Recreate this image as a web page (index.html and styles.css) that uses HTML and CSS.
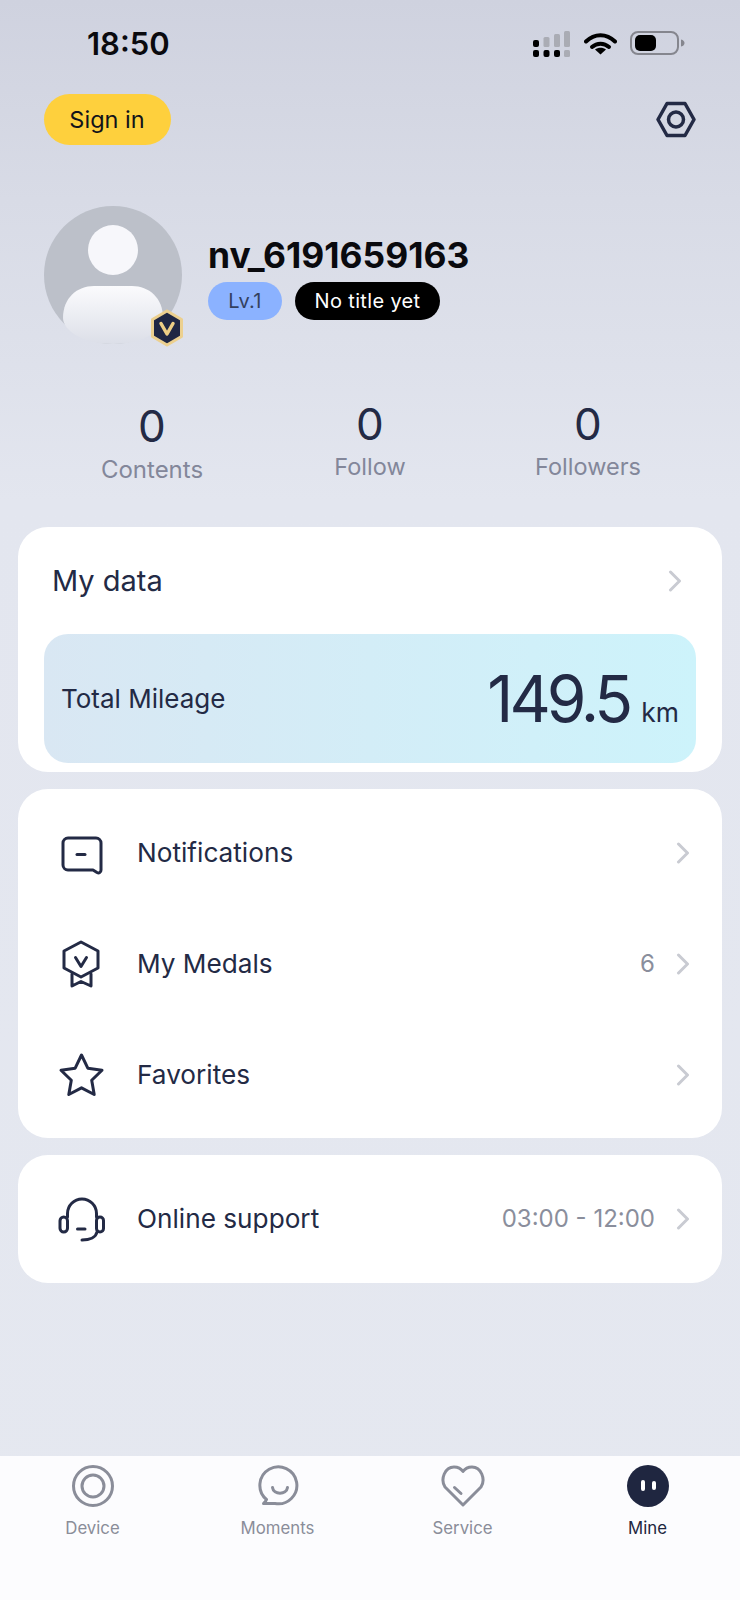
FILE: index.html
```html
<!DOCTYPE html>
<html lang="en">
<head>
<meta charset="utf-8">
<title>Mine</title>
<link rel="stylesheet" href="styles.css">
</head>
<body>
<div class="phone">
  <div class="status">
    <span class="time">18:50</span>
    <div class="status-icons">
      <svg class="signal" width="44" height="28" viewBox="0 0 44 28">
        <g fill="#000"><rect x="1" y="9" width="6" height="7" rx="2"/><rect x="1" y="19" width="6" height="7" rx="2"/><rect x="11.500" y="19" width="6" height="7" rx="2"/><rect x="22" y="19" width="6" height="7" rx="2"/></g>
        <g fill="#aaacb4"><rect x="11.500" y="6" width="6" height="10" rx="1.500"/><rect x="22" y="3" width="6" height="13" rx="1.500"/><rect x="32" y="0" width="6" height="16" rx="1.500"/><rect x="32" y="19" width="6" height="7" rx="1.500"/></g>
      </svg>
      <svg class="wifi" width="33" height="24" viewBox="0 0 33 24" fill="none">
        <path d="M2 10.500C10.500 2 22.500 2 31 10.500" stroke="#000" stroke-width="4" stroke-linecap="round"/>
        <path d="M8 16C13 11.500 20 11.500 25 16" stroke="#000" stroke-width="4" stroke-linecap="round"/>
        <path d="M16.500 23.500L11 18.500C14 16 19 16 22 18.500Z" fill="#000"/>
      </svg>
      <svg class="battery" width="55" height="24" viewBox="0 0 55 24" fill="none">
        <rect x="1" y="1" width="47" height="22" rx="7" stroke="#85868e" stroke-width="2"/>
        <rect x="5" y="4" width="21" height="16" rx="5" fill="#000"/>
        <path d="M51 8.500c2.500.5 3.500 2 3.500 3.500s-1 3-3.500 3.500z" fill="#85868e"/>
      </svg>
    </div>
  </div>

  <div class="topbar">
    <button class="signin">Sign in</button>
    <svg class="gear" width="40" height="37" viewBox="0 0 40 37" fill="none" stroke="#232a45" stroke-width="3.500" stroke-linejoin="round">
      <path d="M11 2.500H29L38 18.500L29 34.500H11L2 18.500Z"/>
      <circle cx="20" cy="18.500" r="7.500"/>
    </svg>
  </div>

  <div class="profile">
    <div class="avatar">
      <svg width="138" height="138" viewBox="0 0 138 138">
        <defs>
          <linearGradient id="bodyfade" x1="0" y1="0" x2="0" y2="1">
            <stop offset="0" stop-color="#fbfbfd"/>
            <stop offset="1" stop-color="#dcdfe8"/>
          </linearGradient>
        </defs>
        <circle cx="69" cy="69" r="69" fill="#bcc0c9"/>
        <circle cx="69" cy="44" r="25" fill="#f7f7fb"/>
        <path d="M19 112C19 92 33 80 50 80H88C105 80 119 92 119 112C119 124 100 138 69 138C38 138 19 124 19 112Z" fill="url(#bodyfade)"/>
      </svg>
      <svg class="badge" width="34" height="38" viewBox="0 0 34 38">
        <path d="M17 2L31.500 10.500V27.500L17 36L2.500 27.500V10.500Z" fill="#1f2744" stroke="#ecd08f" stroke-width="3" stroke-linejoin="round"/>
        <path d="M11 14.500L17 25L23 14.500" fill="none" stroke="#ecce85" stroke-width="3.500" stroke-linecap="round" stroke-linejoin="round"/>
      </svg>
    </div>
    <div class="who">
      <div class="name">nv_6191659163</div>
      <div class="pills">
        <span class="pill pill-lv">Lv.1</span>
        <span class="pill pill-title">No title yet</span>
      </div>
    </div>
  </div>

  <div class="stats">
    <div class="stat stat-first"><div class="num">0</div><div class="lab">Contents</div></div>
    <div class="stat"><div class="num">0</div><div class="lab">Follow</div></div>
    <div class="stat"><div class="num">0</div><div class="lab">Followers</div></div>
  </div>

  <section class="card card-data">
    <div class="data-head">
      <span class="data-title">My data</span>
      <svg class="chev" width="14" height="22" viewBox="0 0 14 22" fill="none"><path d="M2.500 2L11.500 11L2.500 20" stroke="#c9cbd2" stroke-width="3" stroke-linecap="round" stroke-linejoin="round"/></svg>
    </div>
    <div class="mileage">
      <span class="mil-label">Total Mileage</span>
      <span class="mil-value"><span class="mil-num">149.5</span><span class="mil-unit">km</span></span>
    </div>
  </section>

  <section class="card card-list">
    <div class="row">
      <svg class="ico" width="48" height="48" viewBox="0 0 48 48" fill="none" stroke="#232a45" stroke-width="3" stroke-linecap="round" stroke-linejoin="round">
        <path d="M10 9H38a5 5 0 0 1 5 5V41c0 2.500-2 3.500-4 2.500L35 41H10a5 5 0 0 1-5-5V14a5 5 0 0 1 5-5Z"/>
        <path d="M19 25.500H27"/>
      </svg>
      <span class="row-text">Notifications</span>
      <svg class="chev" width="14" height="22" viewBox="0 0 14 22" fill="none"><path d="M2.500 2L11.500 11L2.500 20" stroke="#c9cbd2" stroke-width="3" stroke-linecap="round" stroke-linejoin="round"/></svg>
    </div>
    <div class="row">
      <svg class="ico" width="48" height="48" viewBox="0 0 48 48" fill="none" stroke="#232a45" stroke-width="3" stroke-linecap="round" stroke-linejoin="round">
        <path d="M23 2L40 11V28L23 37L6 28V11Z"/>
        <path d="M17.500 17.500L23 26.500L28.500 17.500"/>
        <path d="M14 34V46L23 41.500L33 46V34"/>
      </svg>
      <span class="row-text">My Medals</span>
      <span class="row-val">6</span>
      <svg class="chev" width="14" height="22" viewBox="0 0 14 22" fill="none"><path d="M2.500 2L11.500 11L2.500 20" stroke="#c9cbd2" stroke-width="3" stroke-linecap="round" stroke-linejoin="round"/></svg>
    </div>
    <div class="row">
      <svg class="ico" width="48" height="48" viewBox="0 0 48 48" fill="none" stroke="#232a45" stroke-width="3" stroke-linecap="round" stroke-linejoin="round">
        <path d="M23.500 4L29.800 17.200L44 19.200L33.700 29.300L36.200 43.500L23.500 36.800L10.800 43.500L13.300 29.300L3 19.200L17.200 17.200Z"/>
      </svg>
      <span class="row-text">Favorites</span>
      <svg class="chev" width="14" height="22" viewBox="0 0 14 22" fill="none"><path d="M2.500 2L11.500 11L2.500 20" stroke="#c9cbd2" stroke-width="3" stroke-linecap="round" stroke-linejoin="round"/></svg>
    </div>
  </section>

  <section class="card card-support">
    <div class="row">
      <svg class="ico" width="48" height="48" viewBox="0 0 48 48" fill="none" stroke="#232a45" stroke-width="3" stroke-linecap="round" stroke-linejoin="round">
        <path d="M9.500 22V18.500a14.500 14.500 0 0 1 29 0V22"/>
        <rect x="2" y="22" width="7.500" height="15" rx="3.750"/>
        <rect x="38.500" y="22" width="7" height="15" rx="3.500"/>
        <path d="M39 37C38 42 32 45 24 45"/>
        <path d="M19.500 34H27"/>
      </svg>
      <span class="row-text">Online support</span>
      <span class="row-val">03:00 - 12:00</span>
      <svg class="chev" width="14" height="22" viewBox="0 0 14 22" fill="none"><path d="M2.500 2L11.500 11L2.500 20" stroke="#c9cbd2" stroke-width="3" stroke-linecap="round" stroke-linejoin="round"/></svg>
    </div>
  </section>

  <nav class="tabs">
    <div class="tab">
      <svg width="44" height="44" viewBox="0 0 44 44" fill="none" stroke="#8a8d99" stroke-width="3"><circle cx="22" cy="22" r="19.500"/><circle cx="22" cy="22" r="11"/></svg>
      <span>Device</span>
    </div>
    <div class="tab">
      <svg width="44" height="44" viewBox="0 0 44 44" fill="none" stroke="#8a8d99" stroke-width="3" stroke-linecap="round" stroke-linejoin="round">
        <g transform="translate(2 0)">
          <path d="M8.500 35.500A18.500 18.500 0 1 1 17 39.500H5.500C6.500 38.500 8 37 8.500 35.500Z"/>
          <path d="M14.500 23.500C15.500 31 28.500 31 29.500 23.500"/>
        </g>
      </svg>
      <span>Moments</span>
    </div>
    <div class="tab">
      <svg width="44" height="44" viewBox="0 0 44 44" fill="none" stroke="#8a8d99" stroke-width="3" stroke-linecap="round" stroke-linejoin="round">
        <path d="M22 41L4 23C-1 15 4 3 13 3C17 3 20 4.500 22 7.500C24 4.500 27 3 31 3C40 3 45 15 40 23Z"/>
        <path d="M13.500 23.500L20 29.500"/>
      </svg>
      <span>Service</span>
    </div>
    <div class="tab tab-on">
      <svg width="44" height="44" viewBox="0 0 44 44"><circle cx="22" cy="22" r="21" fill="#1f2640"/><rect x="15" y="16" width="4" height="11" rx="2" fill="#fff"/><rect x="26" y="17" width="4" height="9" rx="2" fill="#fff"/></svg>
      <span>Mine</span>
    </div>
  </nav>
</div>
</body>
</html>
```
FILE: styles.css
```css
* { box-sizing: border-box; }
html, body { margin: 0; padding: 0; }
body { width: 740px; height: 1600px; overflow: hidden; font-family: Inter, "Liberation Sans", sans-serif; color: #232a45; }
.phone { width: 740px; height: 1600px; display: flex; flex-direction: column; background: linear-gradient(180deg, #cfd2df 0px, #d8dbe6 200px, #e3e6ef 500px, #e5e8f0 100%); }

.status { height: 94px; flex: none; display: flex; justify-content: space-between; align-items: flex-start; padding: 29px 55px 0 87px; }
.time { font-size: 31px; font-weight: 600; line-height: 30px; color: #0a0a0e; }
.status-icons { display: flex; align-items: flex-start; gap: 6px; padding-top: 2px; }
.signal { margin-right: 2px; }
.wifi { margin-right: 7px; }

.topbar { height: 51px; flex: none; display: flex; justify-content: space-between; align-items: center; padding: 0 44px; }
.signin { width: 127px; height: 51px; border: 0; border-radius: 26px; background: #fed03d; color: #12131a; font: 400 23.500px Inter, sans-serif; padding: 0 1px 0 0; }
.gear { margin-right: 0; }

.profile { height: 138px; flex: none; margin-top: 61px; padding-left: 44px; display: flex; align-items: flex-start; gap: 26px; }
.avatar { width: 138px; height: 138px; position: relative; flex: none; }
.avatar svg { display: block; }
.avatar .badge { position: absolute; left: 106px; top: 103px; }
.who { padding-top: 30px; }
.name { font-size: 35.400px; font-weight: 700; line-height: 40px; color: #0a0a0e; }
.pills { display: flex; gap: 13px; margin-top: 6px; }
.pill { height: 38px; border-radius: 19px; display: flex; align-items: center; justify-content: center; font-size: 20px; }
.pill-lv { width: 74px; background: #8bb2ff; color: #33415f; letter-spacing: 0.2px; }
.pill-title { width: 145px; background: #000; color: #fff; letter-spacing: 0.35px; }

.stats { height: 183px; flex: none; padding: 58px 43px 0; display: grid; grid-template-columns: repeat(3, 218px); text-align: center; align-items: start; }
.stat-first { padding-top: 2px; }
.num { font-size: 44px; line-height: 44px; color: #232a45; }
.lab { font-size: 23.500px; line-height: 30px; color: #83879a; margin-top: 6px; }
.stat-first .lab { font-size: 24px; margin-top: 7px; }

.card { margin: 0 18px; background: #fff; border-radius: 30px; flex: none; }
.card-data { height: 245px; padding: 0 26px 9px; }
.data-head { height: 107px; display: flex; justify-content: space-between; align-items: center; padding: 0 14px 0 8px; }
.data-title { font-size: 29px; }
.mileage { height: 129px; border-radius: 24px; background: linear-gradient(90deg, #d9e7f3, #cdf3fb); display: flex; justify-content: space-between; align-items: center; padding: 0 17px 0 17px; }
.mil-label { font-size: 26px; }
.mil-value { display: flex; align-items: baseline; gap: 12px; }
.mil-num { font-size: 64px; letter-spacing: -4px; }
.mil-unit { font-size: 26.500px; }

.card-list { height: 349px; margin-top: 17px; padding: 8px 0; }
.card-support { height: 128px; margin-top: 17px; }
.card-support .row { height: 128px; }
.row { height: 111px; display: flex; align-items: center; padding: 0 32px 0 40px; }
.ico { flex: none; margin-right: 31px; }
.row-text { font-size: 26.200px; flex: 1; padding-bottom: 1px; }
.row-val { font-size: 24px; color: #8a8e9c; margin-right: 21px; padding-bottom: 1px; }

.tabs { margin-top: auto; height: 144px; flex: none; background: #fcfcfe; display: grid; grid-template-columns: repeat(4, 185px); padding-top: 8px; }
.tab { display: flex; flex-direction: column; align-items: center; font-size: 16.800px; color: #8a8d99; gap: 10px; }
.tab svg { display: block; }
.tab-on { color: #1f2640; }
```
